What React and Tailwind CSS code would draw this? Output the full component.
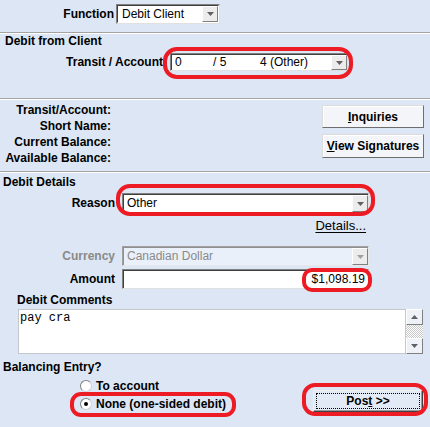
import React from 'react';

// little down triangle used by every combo box
function Arrow({ disabled }) {
  return (
    <div className="w-[16px] shrink-0 flex items-center justify-center bg-[#ececec] border border-t-white border-l-white border-r-[#808080] border-b-[#808080]">
      <svg width="7" height="4" viewBox="0 0 7 4">
        <path d="M0 0h7L3.5 4z" fill={disabled ? '#a0a0a0' : '#606060'} />
      </svg>
    </div>
  );
}

function Sep() {
  return <div className="h-[2px] border-t border-t-[#a3a3a3] border-b border-b-white" />;
}

function Overlay({ className }) {
  return <div className={`absolute pointer-events-none border-[4px] border-[#ed1c24] ${className}`} />;
}

function Radio({ checked, label }) {
  return (
    <div className="flex items-center h-[14px]">
      <div className="w-[12px] h-[12px] rounded-full bg-white border border-t-[#808080] border-l-[#808080] border-r-[#d0d0d0] border-b-[#d0d0d0] flex items-center justify-center">
        {checked && <div className="w-[4px] h-[4px] rounded-full bg-black" />}
      </div>
      <span className="ml-[4px] font-bold text-[12px] leading-[14px]">{label}</span>
    </div>
  );
}

export default function App() {
  return (
    <div className="w-[430px] h-[427px] relative overflow-hidden bg-[#dce6f4] text-black font-['Liberation_Sans',Arial,sans-serif]">
      {/* Function */}
      <div className="h-[32px] flex items-start pt-[4px]">
        <div className="w-[114px] text-right font-bold text-[12px] leading-[20px]">Function</div>
        <div className="ml-[2px] w-[104px] h-[20px] flex bg-white border border-t-[#808080] border-l-[#808080] border-r-[#e0e0e0] border-b-[#e0e0e0]">
          <div className="flex-1 border border-t-[#404040] border-l-[#404040] border-r-white border-b-white text-[12px] leading-[16px] pl-[4px] flex">
            <span className="flex-1">Debit Client</span>
            <Arrow />
          </div>
        </div>
      </div>
      <Sep />

      {/* Debit from Client */}
      <div className="h-[64px]">
        <div className="pl-[5px] font-bold text-[12px] leading-[14px]">Debit from Client</div>
        <div className="mt-[5px] flex">
          <div className="w-[163px] text-right font-bold text-[12px] leading-[18px]">Transit / Account</div>
          <div className="ml-[7px] w-[178px] h-[18px] flex bg-white border border-t-[#808080] border-l-[#808080] border-r-[#e0e0e0] border-b-[#e0e0e0]">
            <div className="flex-1 flex border-t border-l border-t-[#404040] border-l-[#404040] text-[12px] leading-[15px]">
              <span className="pl-[3px] w-[41px]">0</span>
              <span className="w-[47px]">/ 5</span>
              <span className="flex-1">4 (Other)</span>
              <Arrow />
            </div>
          </div>
        </div>
      </div>
      <Sep />

      {/* account info */}
      <div className="h-[71px] flex justify-between">
        <div className="pt-[2px] w-[111px] text-right font-bold text-[12px] leading-[16px]">
          <div>Transit/Account:</div>
          <div>Short Name:</div>
          <div>Current Balance:</div>
          <div>Available Balance:</div>
        </div>
        <div className="pt-[5px] pr-[6px] flex flex-col gap-[6px]">
          <button className="w-[102px] h-[23px] bg-[#f3f5f9] border border-t-[#dcdcdc] border-l-[#dcdcdc] border-r-[#6e6e6e] border-b-[#6e6e6e] shadow-[inset_1px_1px_0_#fff] font-bold text-[12px] leading-[20px]">
            <span className="underline">I</span>nquiries
          </button>
          <button className="w-[102px] h-[24px] bg-[#f3f5f9] border border-t-[#dcdcdc] border-l-[#dcdcdc] border-r-[#6e6e6e] border-b-[#6e6e6e] shadow-[inset_1px_1px_0_#fff] font-bold text-[12px] leading-[21px]">
            <span className="underline">V</span>iew Signatures
          </button>
        </div>
      </div>
      <Sep />

      {/* Debit Details */}
      <div className="pt-[2px] pl-[3px] font-bold text-[12px] leading-[14px]">Debit Details</div>
      <div className="mt-[4px] flex">
        <div className="w-[115px] text-right font-bold text-[12px] leading-[20px]">Reason</div>
        <div className="ml-[7px] w-[247px] h-[20px] flex bg-white border border-t-[#808080] border-l-[#808080] border-r-[#e0e0e0] border-b-[#e0e0e0]">
          <div className="flex-1 flex border-t border-l border-t-[#404040] border-l-[#404040] text-[12px] leading-[17px]">
            <span className="flex-1 pl-[3px]">Other</span>
            <Arrow />
          </div>
        </div>
      </div>
      <div className="mt-[6px] w-[366px] flex justify-end">
        <span className="text-[13px] leading-[14px] underline underline-offset-[2px]">Details...</span>
      </div>

      <div className="mt-[13px] flex">
        <div className="w-[115px] text-right font-bold text-[12px] leading-[20px] text-[#8a8a8a]">Currency</div>
        <div className="ml-[7px] w-[247px] h-[20px] flex bg-[#e9f0fa] border border-t-[#a0a0a0] border-l-[#a0a0a0] border-r-[#e8e8e8] border-b-[#e8e8e8]">
          <div className="flex-1 flex border-t border-l border-t-[#909090] border-l-[#909090] text-[12px] leading-[17px] text-[#8a8a8a]">
            <span className="flex-1 pl-[3px]">Canadian Dollar</span>
            <Arrow disabled />
          </div>
        </div>
      </div>

      <div className="mt-[3px] flex">
        <div className="w-[115px] text-right font-bold text-[12px] leading-[20px]">Amount</div>
        <div className="ml-[7px] w-[247px] h-[20px] bg-white border border-t-[#808080] border-l-[#808080] border-r-[#e0e0e0] border-b-[#e0e0e0]">
          <div className="h-full border-t border-l border-t-[#404040] border-l-[#404040] text-[12px] leading-[17px] text-right pr-[3px]">$1,098.19</div>
        </div>
      </div>

      <div className="mt-[4px] pl-[17px] font-bold text-[12px] leading-[14px]">Debit Comments</div>
      <div className="mt-[2px] pl-[18px] flex h-[45px]">
        <div className="w-[388px] bg-white border border-[#c4c8cc] font-['Liberation_Mono','Courier_New',monospace] text-[12px] leading-[14px] pl-[1px] pt-[1px]">pay cra</div>
        <div className="w-[17px] flex flex-col">
          <div className="h-[16px] flex items-center justify-center bg-[#eef2f8] border border-t-white border-l-white border-r-[#808080] border-b-[#808080]">
            <svg width="7" height="4" viewBox="0 0 7 4"><path d="M3.5 0L7 4H0z" fill="#606060" /></svg>
          </div>
          <div className="flex-1 bg-[repeating-conic-gradient(#c8c8c8_0_25%,#fff_0_50%)] bg-[length:2px_2px]" />
          <div className="h-[16px] flex items-center justify-center bg-[#eef2f8] border border-t-white border-l-white border-r-[#808080] border-b-[#808080]">
            <svg width="7" height="4" viewBox="0 0 7 4"><path d="M0 0h7L3.5 4z" fill="#606060" /></svg>
          </div>
        </div>
      </div>

      <div className="mt-[6px] pl-[3px] font-bold text-[12px] leading-[14px]">Balancing Entry?</div>
      <div className="flex justify-between">
        <div className="pl-[80px] pt-[5px] flex flex-col gap-[4px]">
          <Radio label="To account" />
          <Radio checked label="None (one-sided debit)" />
        </div>
        <div className="mt-[14px] mr-[7px]">
          <button className="w-[110px] h-[22px] p-[2px] bg-[#e2eaf5] border border-t-[#f0f0f0] border-l-[#f0f0f0] border-r-[#404040] border-b-[#404040] shadow-[inset_-1px_-1px_0_#9a9a9a]">
            <div className="h-full border border-dotted border-black font-bold text-[12px] leading-[14px]">
              Pos<span className="underline">t</span> &gt;&gt;
            </div>
          </button>
        </div>
      </div>

      {/* red annotation marks */}
      <Overlay className="left-[163px] top-[47px] w-[190px] h-[32px] rounded-[14px]" />
      <Overlay className="left-[116px] top-[184px] w-[259px] h-[32px] rounded-[14px]" />
      <Overlay className="left-[302px] top-[268px] w-[70px] h-[24px] rounded-[10px]" />
      <Overlay className="left-[70px] top-[392px] w-[166px] h-[25px] rounded-[11px]" />
      <Overlay className="left-[302px] top-[383px] w-[126px] h-[33px] rounded-[13px]" />
    </div>
  );
}
